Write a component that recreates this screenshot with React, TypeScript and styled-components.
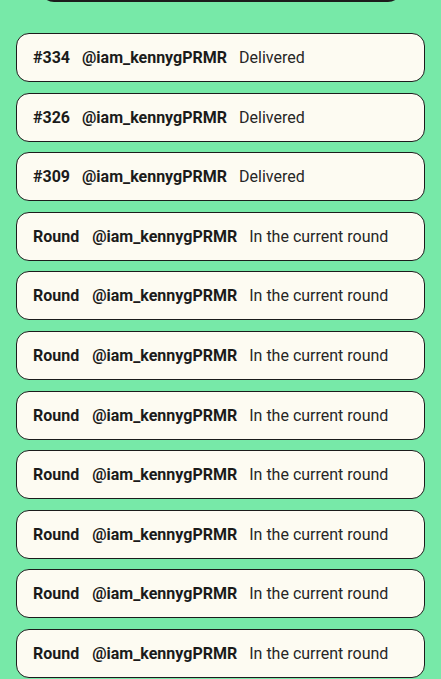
import React from "react";
import styled, { createGlobalStyle } from "styled-components";

const Global = createGlobalStyle`
  html, body { margin: 0; padding: 0; background: #77e9a8; }
  body { font-family: Roboto, "Noto Sans", sans-serif; overflow: hidden; }
`;

const Page = styled.div`
  display: flex;
  flex-direction: column;
  padding: 0 16px;
  min-height: 679px;
  background: #77e9a8;
`;

const TopCard = styled.div`
  height: 40px;
  margin: -42px 23px 0 24px;
  background: #fdfbf2;
  border: 2px solid #1c1c1c;
  border-radius: 14px;
`;

const List = styled.div`
  display: flex;
  flex-direction: column;
  gap: 10.6px;
  margin-top: 31px;
`;

const Row = styled.div`
  height: 49px;
  box-sizing: border-box;
  display: flex;
  align-items: center;
  padding: 0 16px;
  background: #fdfbf2;
  border: 1.8px solid #1c1c1c;
  border-radius: 13px;
  font-size: 16px;
  color: #1b1b1b;
`;

const Label = styled.span<{ $gap: number }>`
  font-weight: 700;
  margin-right: ${(p) => p.$gap}px;
`;

const User = styled.span`
  font-weight: 700;
  margin-right: 12px;
`;

const Status = styled.span`
  font-weight: 400;
  color: #262626;
`;

const rows = [
  { label: "#334", status: "Delivered" },
  { label: "#326", status: "Delivered" },
  { label: "#309", status: "Delivered" },
  ...Array.from({ length: 8 }, () => ({ label: "Round", status: "In the current round" })),
];

export default function App() {
  return (
    <>
      <Global />
      <Page>
        <TopCard />
        <List>
          {rows.map((r, i) => (
            <Row key={i}>
              <Label $gap={r.label === "Round" ? 13 : 12}>{r.label}</Label>
              <User>@iam_kennygPRMR</User>
              <Status>{r.status}</Status>
            </Row>
          ))}
        </List>
      </Page>
    </>
  );
}
